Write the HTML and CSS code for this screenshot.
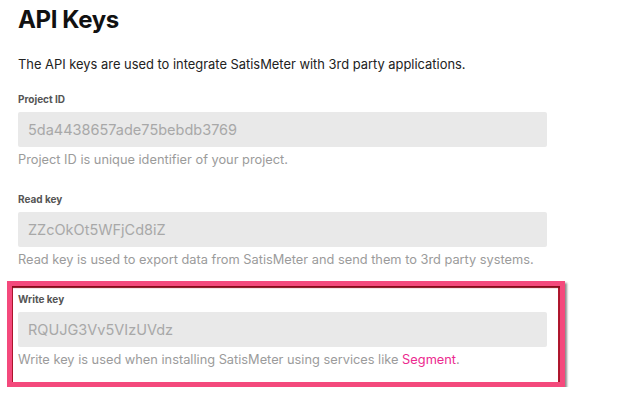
FILE: index.html
```html
<!DOCTYPE html>
<html>
<head>
<meta charset="utf-8">
<link rel="stylesheet" href="styles.css">
</head>
<body>
<div class="page">
  <h1 class="title">API Keys</h1>
  <p class="intro">The API keys are used to integrate SatisMeter with 3rd party applications.</p>

  <div class="field first">
    <div class="label">Project ID</div>
    <div class="input">5da4438657ade75bebdb3769</div>
    <div class="help">Project ID is unique identifier of your project.</div>
  </div>

  <div class="field">
    <div class="label">Read key</div>
    <div class="input">ZZcOkOt5WFjCd8iZ</div>
    <div class="help">Read key is used to export data from SatisMeter and send them to 3rd party systems.</div>
  </div>

  <div class="field highlight">
    <div class="label">Write key</div>
    <div class="input">RQUJG3Vv5VIzUVdz</div>
    <div class="help">Write key is used when installing SatisMeter using services like <a class="link" href="#">Segment</a>.</div>
  </div>
</div>
</body>
</html>
```

FILE: styles.css
```css
html, body {
  margin: 0;
  padding: 0;
  background: #ffffff;
}
body {
  font-family: Inter, "Noto Sans", sans-serif;
  color: #222;
}
.page {
  padding: 5px 0 0 18px;
  width: 529px;
}
.title {
  margin: 0;
  font-size: 24px;
  line-height: 30px;
  font-weight: 700;
  color: #111;
  letter-spacing: -0.4px;
}
.intro {
  margin: 22px 0 0 0;
  font-size: 12.9px;
  line-height: 16px;
  color: #222;
}
.field {
  margin-top: 24px;
}
.field.first {
  margin-top: 19px;
}
.label {
  font-size: 10px;
  line-height: 14px;
  font-weight: 700;
  color: #555;
}
.input {
  margin-top: 6px;
  height: 35px;
  box-sizing: border-box;
  background: #e9e9e9;
  border-radius: 2px;
  padding-left: 10px;
  font-size: 14.5px;
  line-height: 35px;
  color: #a8a8a8;
}
.help {
  margin-top: 5px;
  font-size: 12.8px;
  line-height: 16px;
  color: #9b9b9b;
}
.link {
  color: #ec2a8f;
  text-decoration: none;
}
.field.highlight {
  margin: 13px -18px 0 -11px;
  padding: 6px 13px 14px 6px;
  border: 5px solid #f4497c;
  box-shadow: inset 0 2px 1px #8a0a1a, inset 1px 0 0 #b0172f, inset -2px 0 0 #b0172f, 2px 2px 2px rgba(0,0,0,0.45);
}
```
